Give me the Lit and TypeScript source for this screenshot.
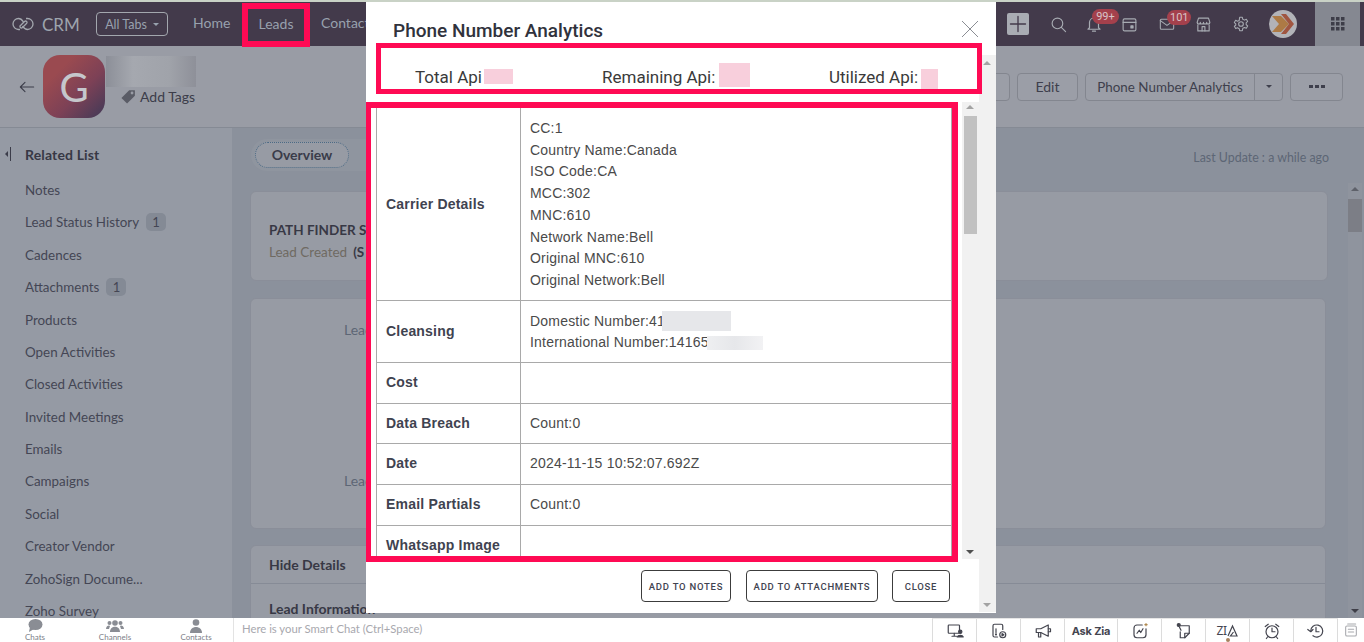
import { LitElement, html, css, svg } from "lit";
import { customElement } from "lit/decorators.js";

const ico = (w: number, body: unknown, cls = "") =>
  html`<svg class=${cls} width=${w} height=${w} viewBox="0 0 24 24" fill="none" stroke="currentColor" stroke-width="1.6" stroke-linecap="round" stroke-linejoin="round">${body}</svg>`;

const sideItems: [string, string?][] = [
  ["Notes"], ["Lead Status History", "1"], ["Cadences"], ["Attachments", "1"], ["Products"],
  ["Open Activities"], ["Closed Activities"], ["Invited Meetings"], ["Emails"], ["Campaigns"],
  ["Social"], ["Creator Vendor"], ["ZohoSign Docume..."], ["Zoho Survey"],
];

const carrier = ["CC:1", "Country Name:Canada", "ISO Code:CA", "MCC:302", "MNC:610", "Network Name:Bell", "Original MNC:610", "Original Network:Bell"];

const bottomIcons = [
  svg`<rect x="3" y="4" width="15" height="11" rx="1"/><path d="M8 19h6M11 15v4"/><circle cx="19" cy="13" r="2.2" fill="currentColor"/><path d="M15 20c1-3 7-3 8 0z" fill="currentColor"/>`,
  svg`<path d="M10 20H6a2 2 0 0 1-2-2V5a2 2 0 0 1 2-2h9a2 2 0 0 1 2 2v5"/><circle cx="17" cy="17" r="4"/><path d="M16 15.5l2.5 1.5-2.5 1.5z" fill="currentColor"/><path d="M8 9v5"/><circle cx="8" cy="16.5" r=".6"/>`,
  svg`<path d="M3 9h6l10-5v15l-10-5H3z"/><path d="M6 14v6h3v-6"/><path d="M19 9h3v4h-3"/>`,
  null,
  svg`<path d="M20 9v8a4 4 0 0 1-4 4H8a4 4 0 0 1-4-4V8a4 4 0 0 1 4-4h7"/><path d="M8 15l3-4 2 3 3-5"/><path d="M20 2v3M18.500 3.500h3" stroke="#b08a50"/>`,
  svg`<circle cx="5" cy="4" r="2" fill="currentColor"/><path d="M7 5h12v10l-6 6H7v-8M6 7l2 4"/><path d="M13 21v-6h6"/>`,
  null,
  svg`<circle cx="12" cy="13" r="8"/><path d="M12 8v5h4M3 6l4-3M21 6l-4-3M6 20l-1.500 2M18 20l1.500 2"/>`,
  svg`<path d="M5 12a8 8 0 1 1 3 6.300"/><path d="M1 10l4 3 3-3"/><path d="M12 7v6h4"/>`,
];

@customElement("app-root")
export class AppRoot extends LitElement {
  static styles = css`
    :host { display: block; position: relative; width: 1364px; height: 642px; overflow: hidden; background: #8b919c; font-family: Lato, "Open Sans", sans-serif; font-size: 14px; color: #3e3e4c; }
    .strip { height: 2px; background: #c9d2c6; }
    .nav { height: 44px; background: #433a4b; display: flex; align-items: center; color: #98a1ae; font-size: 14px; padding-left: 12px; position: relative; }
    .logo { color: #a3a7ae; margin-right: 8px; }
    .crm { font-size: 17px; font-weight: 400; color: #9ea4ad; width: 54px; }
    .alltabs { width: 70px; height: 22px; border: 1px solid #a3a7ae; border-radius: 4px; display: flex; align-items: center; justify-content: center; gap: 6px; font-size: 12.500px; margin-right: 25px; }
    .caret { width: 0; height: 0; border: 3.500px solid transparent; border-top-color: currentColor; border-bottom: 0; }
    .navitem { white-space: nowrap; padding-bottom: 3px; }
    .home { width: 49px; }
    .leadsbox { width: 56px; height: 29px; border: 6px solid #ff0a54; display: flex; align-items: center; justify-content: center; margin: 2px 11px 0 0; padding-bottom: 3px; }
    .navright { margin-left: auto; display: flex; align-items: center; height: 44px; }
    .plus { width: 22px; height: 22px; border-radius: 2px; background: #a9acb3; color: #433a4b; display: flex; align-items: center; justify-content: center; margin-right: 21px; }
    .ni { position: relative; display: flex; color: #a7abb2; }
    .search { margin-right: 18px; }
    .bell { margin-right: 18px; }
    .cal { margin-right: 21px; }
    .mail { margin-right: 20px; }
    .store { margin-right: 21px; }
    .gear { margin-right: 20px; }
    .badge { position: absolute; height: 15px; padding: 0 3px; border-radius: 8px; background: #a4404c; color: #d9c4c8; font-size: 11px; line-height: 15px; font-family: Roboto, sans-serif; text-align: center; }
    .b1 { left: 7px; top: -6px; width: 21px; }
    .b2 { left: 8px; top: -6px; width: 18px; }
    .avatar { width: 28px; height: 28px; margin-right: 18px; display: block; }
    .apps { width: 45px; height: 44px; background: #858891; color: #3d3d48; display: flex; align-items: center; justify-content: center; margin-right: 4px; }

    .sub { height: 81px; background: #999ca5; border-bottom: 1px solid #858a94; display: flex; align-items: center; padding: 0 21px 0 19px; }
    .back { color: #3c3d4a; margin-right: 8px; display: flex; }
    .photo { width: 62px; height: 63px; border-radius: 17px; background: linear-gradient(135deg, #9a4a50 25%, #7d4156 60%, #4f3b57 90%); color: #c5c7cc; font-size: 40px; display: flex; align-items: center; justify-content: center; }
    .ident { width: 90px; align-self: flex-start; margin: 10px 0 0 1px; display: flex; flex-direction: column; }
    .redact { height: 31px; background: linear-gradient(90deg, #8c8f98, #a5a8af 30%, #a0a3aa 70%, #8e9099); }
    .tags { display: flex; align-items: center; gap: 3px; margin-left: 14px; font-size: 14px; height: 18px; white-space: nowrap; color: #3c3d4a; }
    .actions { margin-left: auto; display: flex; gap: 7px; align-items: center; }
    .btn { height: 26px; border: 1px solid #83868f; border-radius: 4px; background: #9b9ea7; display: flex; align-items: center; justify-content: center; font-size: 14px; color: #3e3f4c; box-sizing: content-box; }
    .b-hidden { width: 90px; }
    .b-edit { width: 59px; }
    .b-pna { width: 196px; justify-content: flex-start; }
    .b-label { width: 168px; flex: none; text-align: center; border-right: 1px solid #83868f; line-height: 26px; white-space: nowrap; font-size: 13.400px; }
    .dd { flex: 1; display: flex; justify-content: center; color: #3e3f4c; }
    .b-more { width: 51px; gap: 2px; }
    .b-more i { width: 4px; height: 3px; background: #3e3f4c; display: block; }

    .mid { height: 490px; display: flex; overflow: hidden; }
    .side { width: 232px; background: #959aa4; padding-top: 10px; box-sizing: border-box; flex: none; }
    .side-h { height: 32.4px; display: flex; align-items: center; margin-bottom: 3.4px; font-weight: 700; padding-left: 5px; color: #373845; letter-spacing: .15px; }
    .collapse { width: 20px; display: flex; color: #3c3d4a; }
    .side-i { height: 32.4px; display: flex; align-items: center; padding-left: 25px; gap: 7px; color: #444654; white-space: nowrap; font-size: 13.400px; }
    .count { width: 20px; height: 18px; border-radius: 5px; background: #848a95; text-align: center; line-height: 18px; font-size: 13px; }
    .main { flex: 1; padding-left: 18px; position: relative; }
    .tabs { display: flex; align-items: center; height: 32px; margin-top: 11px; justify-content: space-between; padding-right: 35px; padding-left: 1px; }
    .tabwrap { width: 300px; height: 32px; border-radius: 16px; background: #8f959f; padding: 3px 4px; box-sizing: border-box; }
    .tab { width: 94px; height: 26px; box-sizing: border-box; border: 1px dotted #4b6a85; border-radius: 13px; background: #979ba4; display: flex; align-items: center; justify-content: center; font-weight: 700; color: #3a3c4a; padding-bottom: 2px; }
    .upd { font-size: 12.400px; color: #5d6675; margin-top: 4px; }
    .card { background: #979ba4; border: 1px solid #8a8e99; border-radius: 6px; box-sizing: border-box; overflow: hidden; }
    .c1 { width: 1078px; height: 90px; margin-top: 20px; padding: 27px 18px 0 18px; line-height: 22px; font-size: 13.500px; }
    .c1 b { display: block; font-weight: 700; color: #373845; white-space: nowrap; }
    .c1 span { color: #6f6a62; }
    .c1 i { font-style: normal; font-weight: 700; color: #373845; margin-left: 6px; }
    .c2 { width: 1076px; height: 231px; margin-top: 17px; padding: 23px 0 0 93px; color: #5d6675; line-height: 16px; }
    .c2 div + div { margin-top: 135px; }
    .c3 { width: 1076px; height: 120px; margin-top: 16px; }
    .c3 .hd { height: 38px; border-bottom: 1px solid #868b96; display: flex; align-items: center; padding: 0 0 0 18px; box-sizing: border-box; font-weight: 700; color: #373845; }
    .c3 .li { padding: 16px 0 0 18px; font-weight: 700; color: #373845; line-height: 17px; white-space: nowrap; }
    .mainbar { position: absolute; right: 2px; top: 55px; bottom: 0; width: 14px; background: #8f949e; }
    .thumb { position: absolute; left: 0; top: 16px; width: 14px; height: 33px; background: #7c7e86; }
    .arr { position: absolute; left: 3px; width: 0; height: 0; border: 4px solid transparent; }
    .up { top: 4px; border-bottom-color: #5e616a; border-top: 0; }
    .dn { bottom: 5px; border-top-color: #3f3f48; border-bottom: 0; }

    .bottom { height: 24px; background: #fff; display: flex; align-items: stretch; }
    .chats { width: 234px; flex: none; display: flex; border-right: 1px solid #e3e3e3; box-sizing: border-box; position: relative; }
    .chat { display: flex; flex-direction: column; align-items: center; font-size: 8px; color: #7d8088; line-height: 9px; position: absolute; }
    .c-a { left: 24px; top: 1px; width: 22px; }
    .c-b { left: 99px; top: 1px; width: 32px; }
    .c-c { left: 180px; top: 1px; width: 32px; }
    .smart { padding-left: 8px; font-size: 11.300px; color: #a8a8ae; line-height: 22px; width: 698px; flex: none; box-sizing: border-box; white-space: nowrap; }
    .tools { display: flex; border-left: 1px solid #dcdcdc; border-top: 1px solid #e6e6e6; }
    .tool { width: 43px; border-right: 1px solid #dcdcdc; display: flex; align-items: center; justify-content: center; color: #44454f; position: relative; }
    .askzia { width: 52px; font-weight: 700; font-size: 11px; font-family: Inter, sans-serif; white-space: nowrap; letter-spacing: -.2px; }
    .zia { font-size: 12px; font-family: "Noto Sans", sans-serif; letter-spacing: -.5px; margin-right: 1px; }
    .dot { position: absolute; left: 20px; bottom: 0; width: 4px; height: 4px; border-radius: 50%; background: #a8825f; }
    .last { width: 27px; display: flex; align-items: center; justify-content: center; color: #a8a9ae; }

    .modal { position: absolute; left: 366px; top: 2px; width: 630px; height: 611px; background: #fff; box-sizing: border-box; font-family: Roboto, sans-serif; }
    .outer-track { position: absolute; right: 0; top: 53px; bottom: 1px; width: 17px; background: #f1f1f1; }
    .marr { position: absolute; left: 4px; width: 0; height: 0; border: 4px solid transparent; }
    .m-up { top: 6px; border-bottom-color: #a3a3a3; border-top: 0; }
    .m-dn { bottom: 5px; border-top-color: #a3a3a3; border-bottom: 0; }
    .m-hd { height: 41px; padding-left: 27px; display: flex; align-items: center; justify-content: space-between; font-size: 19px; font-weight: 500; color: #30323c; padding-top: 15px; box-sizing: border-box; padding-right: 17px; }
    .x { color: #8a8d93; display: flex; margin-top: -2px; }
    .apibox { position: relative; width: 606px; height: 51px; margin-left: 10px; box-sizing: border-box; border: 5px solid #ff0a54; display: grid; grid-template-columns: 187px 227px auto; padding: 0 0 0 34px; align-items: center; font-size: 17px; color: #3a3a3a; }
    .api { display: flex; align-items: center; margin-top: 16px; white-space: nowrap; height: 24px; }
    .pink { background: #f8cfdc; display: block; flex: none; margin-left: 2px; }
    .p1 { width: 29px; height: 15px; }
    .p2 { width: 31px; height: 24px; margin-top: -4px; margin-left: 4px; }
    .p3 { width: 17px; height: 20px; margin-top: 4px; margin-left: 3px; }
    .m-body { display: flex; margin-top: 8px; height: 460px; position: relative; }
    .tablebox { width: 592px; height: 460px; border: 6px solid #ff0a54; border-left-width: 5px; box-sizing: border-box; overflow: hidden; padding-left: 5px; flex: none; }
    table { border-collapse: collapse; width: 576px; table-layout: fixed; font-family: "Liberation Sans", Arial, sans-serif; font-size: 14px; line-height: 21.700px; letter-spacing: .2px; }
    col.k { width: 144px; }
    td { border: 1px solid #a9a9a9; padding: 9px; color: #4a4a4a; vertical-align: middle; }
    tr:nth-child(-n+2) td { padding: 10px 9px 8px; }
    tr:first-child td { border-top: 0; }
    td.k { font-weight: 700; color: #3f4350; }
    .line { display: block; white-space: nowrap; }
    .blur { display: inline-block; vertical-align: top; }
    .b-a { width: 69px; height: 20px; background: #e6e7ea; margin-left: -3px; }
    .b-b { width: 56px; height: 14px; margin: 4px 0 0 -2px; background: linear-gradient(90deg, #eeeff1, #e6e7ea 50%, #f2f2f4); }
    .inner-track { width: 17px; margin-left: 4px; height: 457px; background: #f1f1f1; position: relative; flex: none; }
    .i-up { top: 3px; border-bottom-color: #a3a3a3; border-top: 0; }
    .i-dn { bottom: 5px; border-top-color: #505050; border-bottom: 0; }
    .i-thumb { position: absolute; left: 2px; top: 14px; width: 13px; height: 118px; background: #c1c1c1; }
    .m-ft { display: flex; justify-content: flex-end; gap: 15px; padding: 8px 46px 0 0; }
    .m-btn { height: 32px; box-sizing: border-box; border: 1px solid #3c3c3c; border-radius: 4px; display: flex; align-items: center; justify-content: center; font-size: 9.500px; font-weight: 500; letter-spacing: .75px; color: #3f4350; white-space: nowrap; }
    .w1 { width: 90px; } .w2 { width: 132px; margin-right: -1px; } .w3 { width: 58px; }
  `;

  render() {
    return html`
      <div class="strip"></div>
      <div class="nav">
        <svg class="logo" width="22" height="16" viewBox="0 0 22 16" fill="none" stroke="currentColor" stroke-width="1.300"><path d="M8 13.500H6.500a5.500 5.500 0 0 1 0-11c3 0 4 2 5 3.500"/><path d="M14 2.500h1.500a5.500 5.500 0 0 1 0 11c-3 0-4-2-5-3.500"/><path d="M7.500 10.500l5-5c1.500-1.300 3.500.7 2 2l-4 4c-1.500 1.300-3.500-.7-2-2l3-3"/></svg>
        <span class="crm">CRM</span>
        <div class="alltabs">All Tabs <span class="caret"></span></div>
        <span class="navitem home">Home</span>
        <div class="leadsbox">Leads</div>
        <span class="navitem">Contacts</span>
        <div class="navright">
          <div class="plus">${ico(20, svg`<path d="M3 12h18M12 3v18"/>`)}</div>
          <span class="ni search">${ico(17, svg`<circle cx="10.500" cy="10.500" r="7.500"/><path d="M16 16l6 6"/>`)}</span>
          <span class="ni bell">${ico(18, svg`<path d="M6 17V10a6 6 0 0 1 12 0v7l2 2H4zM10 21.500h4"/>`)}<span class="badge b1">99+</span></span>
          <span class="ni cal">${ico(17, svg`<rect x="3" y="4" width="18" height="17" rx="2"/><path d="M3 9h18"/><rect x="14" y="14" width="3" height="3" fill="currentColor"/>`)}</span>
          <span class="ni mail">${ico(16, svg`<rect x="2" y="5" width="20" height="15" rx="1.500"/><path d="M2 7l10 7 10-7"/>`)}<span class="badge b2">101</span></span>
          <span class="ni store">${ico(17, svg`<path d="M4 10v11h16V10M3 9l2-6h14l2 6c0 3-4.500 3-4.500 0 0 3-4.500 3-4.500 0 0 3-4.500 3-4.500 0C7.500 12 3 12 3 9z"/><path d="M10 21v-6h4v6"/>`)}</span>
          <span class="ni gear">${ico(16, svg`<circle cx="12" cy="12" r="3.500"/><path d="M10 2h4l.7 3 2.600 1.200 2.700-1.400 2 3.400-2.300 2 .1 2.800 2.200 2-2 3.400-2.700-1.200-2.600 1.300L14 22h-4l-.7-3-2.600-1.300-2.700 1.200-2-3.400 2.200-2V11.800L2 9.800l2-3.400 2.700 1.400L9.300 6.600z"/>`)}</span>
          <svg class="avatar" viewBox="0 0 28 28"><circle cx="14" cy="14" r="14" fill="#b2b3b8"/><path d="M3 6h9l8 8-8 8H3l7-8z" fill="#ad7a45"/><path d="M12 4h5l8 10-8 10h-5l8-10z" fill="#a05540"/></svg>
          <div class="apps">
            <svg width="14" height="14" viewBox="0 0 14 14" fill="currentColor"><rect x="0" y="0" width="3.500" height="3.500"/><rect x="5" y="0" width="3.500" height="3.500"/><rect x="10" y="0" width="3.500" height="3.500"/><rect x="0" y="5" width="3.500" height="3.500"/><rect x="5" y="5" width="3.500" height="3.500"/><rect x="10" y="5" width="3.500" height="3.500"/><rect x="0" y="10" width="3.500" height="3.500"/><rect x="5" y="10" width="3.500" height="3.500"/><rect x="10" y="10" width="3.500" height="3.500"/></svg>
          </div>
        </div>
      </div>

      <div class="sub">
        <span class="back">${ico(16, svg`<path d="M22 12H2M9 5l-7 7 7 7"/>`)}</span>
        <div class="photo">G</div>
        <div class="ident">
          <div class="redact"></div>
          <div class="tags"><svg width="17" height="17" viewBox="0 0 24 24" fill="#5a5c66"><path d="M13 3h8v8L10 22l-8-8z"/><circle cx="17" cy="7" r="2" fill="#999ca5"/></svg>Add Tags</div>
        </div>
        <div class="actions">
          <div class="btn b-hidden"></div>
          <div class="btn b-edit">Edit</div>
          <div class="btn b-pna"><span class="b-label">Phone Number Analytics</span><span class="dd"><span class="caret"></span></span></div>
          <div class="btn b-more"><i></i><i></i><i></i></div>
        </div>
      </div>

      <div class="mid">
        <div class="side">
          <div class="side-h"><span class="collapse"><svg width="6" height="14" viewBox="0 0 6 14" fill="currentColor"><path d="M3 4v6L0 7z"/><rect x="5" y="0" width="1" height="14"/></svg></span>Related List</div>
          ${sideItems.map(([n, c]) => html`<div class="side-i">${n}${c ? html`<span class="count">${c}</span>` : ""}</div>`)}
        </div>
        <div class="main">
          <div class="tabs">
            <div class="tabwrap"><div class="tab">Overview</div></div>
            <span class="upd">Last Update : a while ago</span>
          </div>
          <div class="card c1"><b>PATH FINDER S</b><span>Lead Created</span><i>(S</i></div>
          <div class="card c2"><div>Lead</div><div>Lead</div></div>
          <div class="card c3"><div class="hd">Hide Details</div><div class="li">Lead Information</div></div>
          <div class="mainbar"><span class="arr up"></span><span class="thumb"></span><span class="arr dn"></span></div>
        </div>
      </div>

      <div class="bottom">
        <div class="chats">
          <div class="chat c-a"><svg width="16" height="14" viewBox="0 0 16 14" fill="#8a8d94"><ellipse cx="8.500" cy="5.500" rx="7" ry="5.500"/><path d="M3 8l-1 5 5-3z"/></svg>Chats</div>
          <div class="chat c-b"><svg width="18" height="14" viewBox="0 0 18 14" fill="#8a8d94"><circle cx="9" cy="4" r="2.800"/><circle cx="3.500" cy="4" r="2"/><circle cx="14.500" cy="4" r="2"/><path d="M4 13c0-7 10-7 10 0zM0 10c0-4 4-4 4-3l-1 3zM18 10c0-4-4-4-4-3l1 3z"/></svg>Channels</div>
          <div class="chat c-c"><svg width="14" height="14" viewBox="0 0 14 14" fill="#8a8d94"><circle cx="7" cy="3.500" r="3.300"/><path d="M1 14c0-8 12-8 12 0z"/></svg>Contacts</div>
        </div>
        <div class="smart">Here is your Smart Chat (Ctrl+Space)</div>
        <div class="tools">
          ${bottomIcons.map((b, i) =>
            i === 3
              ? html`<div class="tool askzia">Ask Zia</div>`
              : i === 6
                ? html`<div class="tool"><span class="zia">ZI</span><svg width="11" height="13" viewBox="0 0 11 13" fill="none" stroke="currentColor" stroke-width="1.200"><path d="M1 12l4.500-10L10 12H3.500l3-4"/></svg><span class="dot"></span></div>`
                : html`<div class="tool">${ico(18, b)}</div>`
          )}
        </div>
        <div class="last">${ico(16, svg`<rect x="4" y="6" width="16" height="15" rx="2"/><path d="M7 3h12M8 11h8M8 15h8"/>`)}</div>
      </div>

      <div class="modal">
        <div class="outer-track"><span class="marr m-up"></span><span class="marr m-dn"></span></div>
        <div class="m-hd">Phone Number Analytics
          <span class="x"><svg width="18" height="18" viewBox="0 0 18 18" fill="none" stroke="currentColor" stroke-width="1"><path d="M1 1l16 16M17 1L1 17"/></svg></span>
        </div>
        <div class="apibox">
          <div class="api">Total Api<span class="pink p1"></span></div>
          <div class="api">Remaining Api:<span class="pink p2"></span></div>
          <div class="api">Utilized Api:<span class="pink p3"></span></div>
        </div>
        <div class="m-body">
          <div class="tablebox">
            <table>
              <colgroup><col class="k" /><col /></colgroup>
              <tr><td class="k">Carrier Details</td><td>${carrier.map((l) => html`<span class="line">${l}</span>`)}</td></tr>
              <tr><td class="k">Cleansing</td><td><span class="line">Domestic Number:41<span class="blur b-a"></span></span><span class="line">International Number:14165<span class="blur b-b"></span></span></td></tr>
              <tr><td class="k">Cost</td><td></td></tr>
              <tr><td class="k">Data Breach</td><td>Count:0</td></tr>
              <tr><td class="k">Date</td><td>2024-11-15 10:52:07.692Z</td></tr>
              <tr><td class="k">Email Partials</td><td>Count:0</td></tr>
              <tr><td class="k">Whatsapp Image</td><td></td></tr>
            </table>
          </div>
          <div class="inner-track"><span class="marr i-up"></span><span class="i-thumb"></span><span class="marr i-dn"></span></div>
        </div>
        <div class="m-ft">
          <div class="m-btn w1">ADD TO NOTES</div>
          <div class="m-btn w2">ADD TO ATTACHMENTS</div>
          <div class="m-btn w3">CLOSE</div>
        </div>
      </div>
    `;
  }
}
